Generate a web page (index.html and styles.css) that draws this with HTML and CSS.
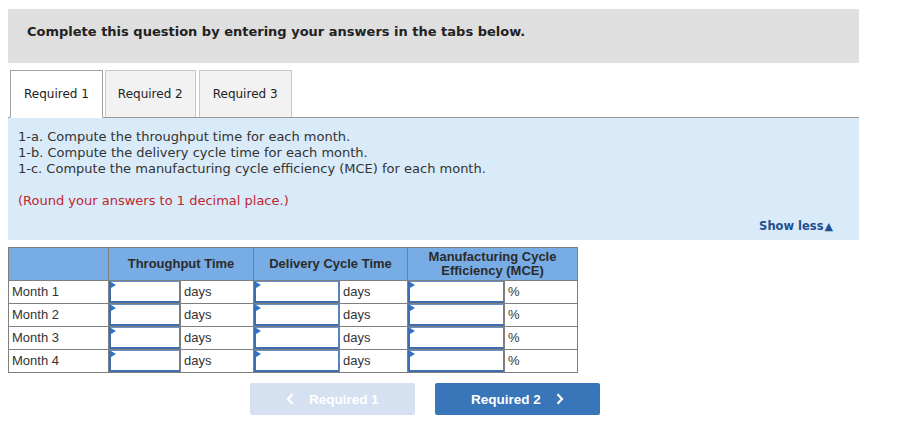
FILE: index.html
```html
<!DOCTYPE html>
<html>
<head>
<meta charset="utf-8">
<link rel="stylesheet" href="styles.css">
</head>
<body>
<div class="page">
  <div class="banner">Complete this question by entering your answers in the tabs below.</div>
  <div class="tabs">
    <div class="tab active">Required 1</div>
    <div class="tab">Required 2</div>
    <div class="tab t3">Required 3</div>
  </div>
  <div class="panel">
    <p class="q">1-a. Compute the throughput time for each month.<br>1-b. Compute the delivery cycle time for each month.<br>1-c. Compute the manufacturing cycle efficiency (MCE) for each month.</p>
    <p class="round">(Round your answers to 1 decimal place.)</p>
    <div class="showless">Show less<span class="tri">&#9650;</span></div>
  </div>
  <table class="grid">
    <colgroup>
      <col class="c-label"><col class="c-in1"><col class="c-u1"><col class="c-in2"><col class="c-u2"><col class="c-in3"><col class="c-u3">
    </colgroup>
    <thead>
      <tr>
        <th></th>
        <th colspan="2">Throughput Time</th>
        <th colspan="2">Delivery Cycle Time</th>
        <th colspan="2">Manufacturing Cycle<br>Efficiency (MCE)</th>
      </tr>
    </thead>
    <tbody>
      <tr><td class="lbl">Month 1</td><td class="in"><div class="box"></div></td><td class="unit">days</td><td class="in"><div class="box"></div></td><td class="unit">days</td><td class="in"><div class="box"></div></td><td class="unit">%</td></tr>
      <tr><td class="lbl">Month 2</td><td class="in"><div class="box"></div></td><td class="unit">days</td><td class="in"><div class="box"></div></td><td class="unit">days</td><td class="in"><div class="box"></div></td><td class="unit">%</td></tr>
      <tr><td class="lbl">Month 3</td><td class="in"><div class="box"></div></td><td class="unit">days</td><td class="in"><div class="box"></div></td><td class="unit">days</td><td class="in"><div class="box"></div></td><td class="unit">%</td></tr>
      <tr><td class="lbl">Month 4</td><td class="in"><div class="box"></div></td><td class="unit">days</td><td class="in"><div class="box"></div></td><td class="unit">days</td><td class="in"><div class="box"></div></td><td class="unit">%</td></tr>
    </tbody>
  </table>
  <div class="nav">
    <div class="btn prev">
      <svg class="chev" width="8" height="12" viewBox="0 0 8 12"><path d="M6.5 1.2 L2 6 L6.5 10.8" fill="none" stroke="#ffffff" stroke-width="2.2"/></svg>
      <span>Required 1</span>
    </div>
    <div class="btn next">
      <span>Required 2</span>
      <svg class="chev" width="8" height="12" viewBox="0 0 8 12"><path d="M1.5 1.2 L6 6 L1.5 10.8" fill="none" stroke="#ffffff" stroke-width="2.2"/></svg>
    </div>
  </div>
</div>
</body>
</html>
```

FILE: styles.css
```css
* { box-sizing: border-box; }
body {
  margin: 0;
  background: #ffffff;
  font-family: "DejaVu Sans", Verdana, sans-serif;
  color: #333333;
}
.page {
  width: 851px;
  margin: 9px 0 0 8px;
}
.banner {
  height: 54px;
  background: #dfdfdf;
  padding: 15px 19px 0;
  font-weight: bold;
  font-size: 13px;
  line-height: 16px;
  color: #222222;
}
.tabs {
  display: flex;
  gap: 2px;
  margin-top: 7px;
  padding-left: 2px;
  border-bottom: 1px solid #999999;
  height: 48px;
}
.tab {
  height: 47px;
  padding: 0 12px;
  border: 1px solid #c8c8c8;
  border-bottom: none;
  background: #f2f2f2;
  font-size: 12px;
  line-height: 47px;
  color: #222222;
}
.tab.active {
  background: #ffffff;
  border-color: #a0a0a0;
  border-bottom: 1px solid #ffffff;
  height: 48px;
  padding: 0 13px;
  margin-bottom: -1px;
}
.tab.t3 { margin-left: 1px; padding: 0 13px; }
.panel {
  height: 122px;
  background: #d9eaf9;
  padding: 11px 26px 0 10px;
  font-size: 13px;
  line-height: 16px;
}
.panel p { margin: 0; }
.q { color: #333333; }
.round {
  margin-top: 16px !important;
  color: #c0262d;
}
.showless {
  margin-top: 9px;
  text-align: right;
  font-size: 11.5px;
  font-weight: bold;
  color: #1f4f8f;
  line-height: 16px;
}
.showless .tri {
  font-size: 11px;
  margin-left: 1px;
}
.grid {
  margin-top: 7px;
  border-collapse: collapse;
  width: 569px;
  table-layout: fixed;
  font-family: "Liberation Sans", Arial, sans-serif;
}
.c-label { width: 100px; }
.c-in1 { width: 72px; }
.c-u1 { width: 73px; }
.c-in2 { width: 86px; }
.c-u2 { width: 68px; }
.c-in3 { width: 97px; }
.c-u3 { width: 73px; }
.grid th, .grid td {
  border: 1px solid #7f7f7f;
  padding: 0;
}
.grid th {
  background: #78ace4;
  height: 33px;
  font-size: 13px;
  font-weight: bold;
  line-height: 14px;
  color: #2b2b2b;
  text-align: center;
}
.grid td {
  height: 23px;
  font-size: 13px;
  line-height: 20px;
  color: #333333;
}
.grid td.lbl { padding-left: 3px; }
.grid td.unit { padding-left: 3px; }
.grid td.in { position: relative; }
.box {
  position: relative;
  height: 22px;
  border-top: 1px solid #6a8fc4;
  border-right: 1px solid #5a80bc;
  border-left: 2px solid #3f6daf;
  border-bottom: 2px solid #3f6daf;
  background: #ffffff;
}
.box::before {
  content: "";
  position: absolute;
  left: 0;
  top: 0;
  border-top: 3px solid transparent;
  border-bottom: 3px solid transparent;
  border-left: 5px solid #2f72c6;
}
.nav {
  display: flex;
  gap: 20px;
  margin-top: 10px;
  margin-left: 242px;
}
.btn {
  width: 165px;
  height: 32px;
  border-radius: 2px;
  display: flex;
  align-items: center;
  justify-content: center;
  gap: 15px;
  font-family: "Liberation Sans", Arial, sans-serif;
  font-size: 13.5px;
  font-weight: bold;
  color: #ffffff;
}
.btn.prev { background: #d5e1f0; }
.btn.next { background: #3875b9; }
.chev { display: block; }
```
